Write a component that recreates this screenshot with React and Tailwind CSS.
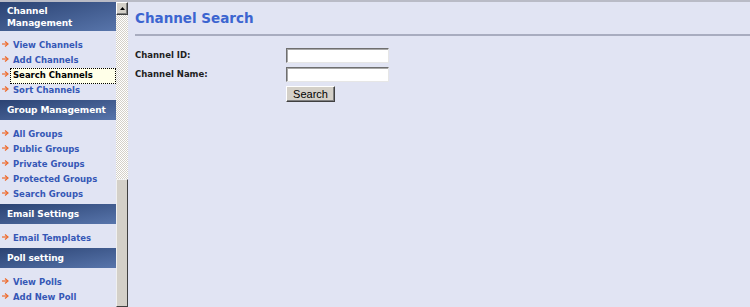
import React from "react";

const Bullet = () => (
  <svg width="7" height="6" viewBox="0 0 7 6" className="mb-[3px]">
    <path d="M0 3 H5.5" stroke="#ee6a2b" strokeWidth="1.2" fill="none" />
    <path d="M3 0.5 L6 3 L3 5.5" stroke="#ee6a2b" strokeWidth="1.2" fill="none" />
  </svg>
);

const Item = ({ label, active }) => (
  <div className="flex h-[15px] items-center">
    <div className="flex w-[10px] shrink-0 items-center pl-[2px]">
      <Bullet />
    </div>
    <div
      className={
        active
          ? "flex h-[16px] flex-1 items-center border border-dotted border-black bg-[#ffffe8] pl-[2px] text-black"
          : "flex h-[15px] flex-1 items-center border border-transparent pl-[2px] text-[#3557b6]"
      }
    >
      {label}
    </div>
  </div>
);

const Header = ({ children, tall }) => (
  <div
    className={
      (tall ? "h-[29px] " : "h-[20px] ") +
      "flex flex-col justify-center whitespace-nowrap bg-gradient-to-br from-[#2b4373] to-[#5875ab] pl-[7px] text-[9px] font-bold leading-[12px] tracking-[-0.1px] text-white"
    }
  >
    {children}
  </div>
);

const Group = ({ items }) => (
  <div className="pt-[7px] pb-[2px]">
    {items.map((it) => (
      <Item key={it.label} label={it.label} active={it.active} />
    ))}
  </div>
);

export default function App() {
  return (
    <div
      className="flex h-[307px] w-[750px] overflow-hidden border-t-2 border-[#b9bbc6] bg-[#e1e4f3] text-[8.5px] font-bold"
      style={{ fontFamily: '"DejaVu Sans", Verdana, sans-serif' }}
    >
      {/* Sidebar */}
      <div className="flex w-[116px] shrink-0 flex-col">
        <Header tall>
          <span>Channel</span>
          <span>Management</span>
        </Header>
        <Group
          items={[
            { label: "View Channels" },
            { label: "Add Channels" },
            { label: "Search Channels", active: true },
            { label: "Sort Channels" },
          ]}
        />
        <Header>Group Management</Header>
        <Group
          items={[
            { label: "All Groups" },
            { label: "Public Groups" },
            { label: "Private Groups" },
            { label: "Protected Groups" },
            { label: "Search Groups" },
          ]}
        />
        <Header>Email Settings</Header>
        <Group items={[{ label: "Email Templates" }]} />
        <Header>Poll setting</Header>
        <Group items={[{ label: "View Polls" }, { label: "Add New Poll" }]} />
      </div>

      {/* Scrollbar */}
      <div className="flex w-[12px] shrink-0 flex-col">
        <div className="flex h-[13px] items-center justify-center border border-t-white border-l-white border-r-[#404040] border-b-[#404040] bg-[#d4d0c8] shadow-[inset_-1px_-1px_0_#808080]">
          <svg width="5" height="3" viewBox="0 0 5 3">
            <path d="M2.5 0 L5 3 L0 3 Z" fill="#000" />
          </svg>
        </div>
        <div className="h-[164px] bg-[repeating-conic-gradient(#d4d0c8_0_25%,#ffffff_0_50%)] bg-[length:2px_2px]" />
        <div className="flex-1 border border-t-[#f0f0f0] border-l-[#f0f0f0] border-r-[#404040] border-b-[#404040] bg-[#d4d0c8]" />
      </div>

      {/* Main */}
      <div className="flex flex-1 flex-col pl-[7px]">
        <div className="flex h-[32px] items-center text-[13.5px] font-bold text-[#3c65d0]">
          Channel Search
        </div>
        <div className="h-[2px] bg-[#a8acbf]" />
        <div className="mt-[12px] grid grid-cols-[151px_103px] gap-y-[4px] text-[#1e1e1e]">
          <div className="flex h-[15px] items-center">Channel ID:</div>
          <input
            type="text"
            className="h-[15px] border border-t-[#6f6f6f] border-l-[#6f6f6f] border-r-[#e6e6e6] border-b-[#e6e6e6] bg-white shadow-[inset_1px_1px_0_#a8a8a8] outline-none"
          />
          <div className="flex h-[15px] items-center">Channel Name:</div>
          <input
            type="text"
            className="h-[15px] border border-t-[#6f6f6f] border-l-[#6f6f6f] border-r-[#e6e6e6] border-b-[#e6e6e6] bg-white shadow-[inset_1px_1px_0_#a8a8a8] outline-none"
          />
          <div />
          <div>
            <button
              className="flex h-[16px] w-[49px] items-center justify-center border border-t-white border-l-white border-r-[#404040] border-b-[#404040] bg-[#d4d0c8] text-[11px] font-normal text-black shadow-[inset_-1px_-1px_0_#808080]"
              style={{ fontFamily: '"Liberation Sans", Arial, sans-serif' }}
            >
              Search
            </button>
          </div>
        </div>
      </div>
    </div>
  );
}
